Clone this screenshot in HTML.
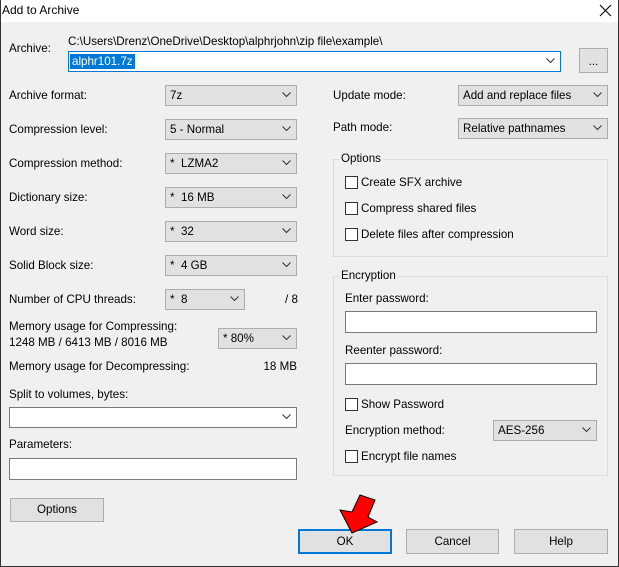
<!DOCTYPE html>
<html><head><style>
*{box-sizing:border-box;margin:0;padding:0}
body{width:619px;height:567px;background:#f0f0f0;font-family:"Liberation Sans",sans-serif;font-size:11.6px;color:#000;position:relative;overflow:hidden}
.a{position:absolute;white-space:nowrap}
.t{position:absolute;white-space:nowrap;line-height:14px}
.sel{position:absolute;background:#e1e1e1;border:1px solid #adadad;height:21px;padding:3px 0 0 4px;line-height:14px}
.inp{position:absolute;background:#fff;border:1px solid #7a7a7a}
.dd{position:absolute;right:5px;top:6px;width:9px;height:6px}
.btn{position:absolute;background:#e1e1e1;border:1px solid #adadad;text-align:center;line-height:21px}
.grp{position:absolute;border:1px solid #dcdcdc}
.cb{position:absolute;width:13px;height:13px;border:1px solid #333;background:#fff}
</style></head><body>
<div class="a" style="left:0;top:0;width:619px;height:22px;background:#fff"></div>
<div class="a" style="left:0;top:0;width:1px;height:567px;background:#333"></div>
<div class="a" style="right:0;top:0;width:1px;height:567px;background:#333"></div>
<div class="a" style="left:0;bottom:0;width:619px;height:1px;background:#333"></div>
<div class="t" style="left:2px;top:3px;font-size:12px">Add to Archive</div>
<svg class="a" style="left:599px;top:4px" width="13" height="13"><path d="M1 1L12 12M12 1L1 12" stroke="#000" stroke-width="1.1"/></svg>

<div class="t" style="left:9px;top:42px">Archive:</div>
<div class="t" style="left:68px;top:35px">C:\Users\Drenz\OneDrive\Desktop\alphrjohn\zip file\example\</div>
<div class="inp" style="left:68px;top:51px;width:493px;height:21px;border-color:#0078d7"><span class="a" style="left:1px;top:2px;background:#0078d7;color:#fff;padding:1px 2px;line-height:13px">alphr101.7z</span><svg class="dd" viewBox="0 0 9 6" style="top:6px"><path d="M0.5 0.5L4.5 4.5L8.5 0.5" fill="none" stroke="#333"/></svg></div>
<div class="btn" style="left:579px;top:48px;width:29px;height:25px;line-height:25px">...</div>

<div class="t" style="left:9px;top:89px">Archive format:</div>
<div class="t" style="left:9px;top:123px">Compression level:</div>
<div class="t" style="left:9px;top:157px">Compression method:</div>
<div class="t" style="left:9px;top:191px">Dictionary size:</div>
<div class="t" style="left:9px;top:225px">Word size:</div>
<div class="t" style="left:9px;top:259px">Solid Block size:</div>
<div class="t" style="left:9px;top:293px">Number of CPU threads:</div>

<div class="sel" style="left:165px;top:85px;width:132px">7z<svg class="dd" viewBox="0 0 9 6"><path d="M0.5 0.5L4.5 4.5L8.5 0.5" fill="none" stroke="#333"/></svg></div>
<div class="sel" style="left:165px;top:119px;width:132px">5 - Normal<svg class="dd" viewBox="0 0 9 6"><path d="M0.5 0.5L4.5 4.5L8.5 0.5" fill="none" stroke="#333"/></svg></div>
<div class="sel" style="left:165px;top:153px;width:132px">* &nbsp;LZMA2<svg class="dd" viewBox="0 0 9 6"><path d="M0.5 0.5L4.5 4.5L8.5 0.5" fill="none" stroke="#333"/></svg></div>
<div class="sel" style="left:165px;top:187px;width:132px">* &nbsp;16 MB<svg class="dd" viewBox="0 0 9 6"><path d="M0.5 0.5L4.5 4.5L8.5 0.5" fill="none" stroke="#333"/></svg></div>
<div class="sel" style="left:165px;top:221px;width:132px">* &nbsp;32<svg class="dd" viewBox="0 0 9 6"><path d="M0.5 0.5L4.5 4.5L8.5 0.5" fill="none" stroke="#333"/></svg></div>
<div class="sel" style="left:165px;top:255px;width:132px">* &nbsp;4 GB<svg class="dd" viewBox="0 0 9 6"><path d="M0.5 0.5L4.5 4.5L8.5 0.5" fill="none" stroke="#333"/></svg></div>
<div class="sel" style="left:165px;top:289px;width:80px">* &nbsp;8<svg class="dd" viewBox="0 0 9 6"><path d="M0.5 0.5L4.5 4.5L8.5 0.5" fill="none" stroke="#333"/></svg></div>
<div class="t" style="left:285px;top:293px">/ 8</div>

<div class="t" style="left:9px;top:320px">Memory usage for Compressing:</div>
<div class="t" style="left:9px;top:336px">1248 MB / 6413 MB / 8016 MB</div>
<div class="sel" style="left:218px;top:328px;width:79px">* 80%<svg class="dd" viewBox="0 0 9 6"><path d="M0.5 0.5L4.5 4.5L8.5 0.5" fill="none" stroke="#333"/></svg></div>
<div class="t" style="left:9px;top:360px">Memory usage for Decompressing:</div>
<div class="t" style="right:322px;top:360px">18 MB</div>
<div class="t" style="left:9px;top:388px">Split to volumes, bytes:</div>
<div class="inp" style="left:9px;top:407px;width:288px;height:21px"><svg class="dd" viewBox="0 0 9 6"><path d="M0.5 0.5L4.5 4.5L8.5 0.5" fill="none" stroke="#333"/></svg></div>
<div class="t" style="left:9px;top:438px">Parameters:</div>
<div class="inp" style="left:9px;top:458px;width:288px;height:22px"></div>
<div class="btn" style="left:10px;top:498px;width:94px;height:24px;line-height:22px">Options</div>

<div class="t" style="left:333px;top:89px">Update mode:</div>
<div class="sel" style="left:458px;top:85px;width:150px">Add and replace files<svg class="dd" viewBox="0 0 9 6"><path d="M0.5 0.5L4.5 4.5L8.5 0.5" fill="none" stroke="#333"/></svg></div>
<div class="t" style="left:333px;top:121px">Path mode:</div>
<div class="sel" style="left:458px;top:118px;width:150px">Relative pathnames<svg class="dd" viewBox="0 0 9 6"><path d="M0.5 0.5L4.5 4.5L8.5 0.5" fill="none" stroke="#333"/></svg></div>

<div class="grp" style="left:333px;top:159px;width:275px;height:98px"></div>
<div class="t" style="left:339px;top:152px;background:#f0f0f0;padding:0 2px">Options</div>
<div class="cb" style="left:345px;top:176px"></div><div class="t" style="left:361px;top:176px">Create SFX archive</div>
<div class="cb" style="left:345px;top:202px"></div><div class="t" style="left:361px;top:202px">Compress shared files</div>
<div class="cb" style="left:345px;top:228px"></div><div class="t" style="left:361px;top:228px">Delete files after compression</div>

<div class="grp" style="left:333px;top:276px;width:275px;height:200px"></div>
<div class="t" style="left:339px;top:269px;background:#f0f0f0;padding:0 2px">Encryption</div>
<div class="t" style="left:345px;top:292px">Enter password:</div>
<div class="inp" style="left:345px;top:311px;width:252px;height:22px"></div>
<div class="t" style="left:345px;top:344px">Reenter password:</div>
<div class="inp" style="left:345px;top:363px;width:252px;height:22px"></div>
<div class="cb" style="left:345px;top:398px"></div><div class="t" style="left:361px;top:398px">Show Password</div>
<div class="t" style="left:345px;top:424px">Encryption method:</div>
<div class="sel" style="left:493px;top:420px;width:104px">AES-256<svg class="dd" viewBox="0 0 9 6"><path d="M0.5 0.5L4.5 4.5L8.5 0.5" fill="none" stroke="#333"/></svg></div>
<div class="cb" style="left:345px;top:450px"></div><div class="t" style="left:361px;top:450px">Encrypt file names</div>

<div class="btn" style="left:298px;top:529px;width:94px;height:25px;border:2px solid #0078d7;line-height:21px">OK</div>
<div class="btn" style="left:406px;top:529px;width:93px;height:25px;line-height:23px">Cancel</div>
<div class="btn" style="left:514px;top:529px;width:94px;height:25px;line-height:23px">Help</div>

<svg class="a" style="left:0;top:0" width="619" height="567"><polygon points="360,495 375,500 368,517 377,522 352,533 340,510 352,512" fill="#f00" stroke="#000" stroke-width="1"/></svg>
</body></html>
